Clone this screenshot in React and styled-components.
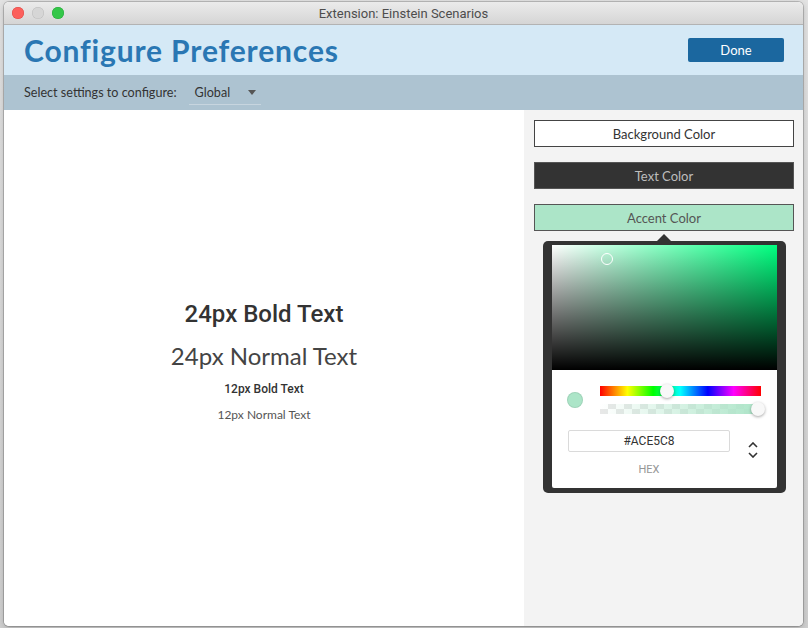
import React from "react";
import styled, { createGlobalStyle } from "styled-components";

const GlobalStyle = createGlobalStyle`
  html, body { margin: 0; padding: 0; background: #cfcfcf; }
  body { font-family: Lato, "Open Sans", sans-serif; }
  * { box-sizing: border-box; }
`;

const Page = styled.div`
  width: 808px;
  height: 628px;
  padding: 2px 5px 0 4px;
  overflow: hidden;
  background: linear-gradient(#e2e2e2, #cfcfcf);
`;

const Window = styled.div`
  width: 799px;
  height: 624px;
  border-radius: 5px;
  overflow: hidden;
  display: flex;
  flex-direction: column;
  background: #fff;
  box-shadow: 0 0 0 1px rgba(0, 0, 0, 0.18), 0 2px 6px rgba(0, 0, 0, 0.2);
`;

const TitleBar = styled.div`
  height: 23px;
  flex: none;
  display: grid;
  grid-template-columns: 1fr auto 1fr;
  align-items: center;
  border-bottom: 1px solid #b3b3b3;
  background: linear-gradient(#ebebeb, #d5d5d5);
`;

const Lights = styled.div`
  display: flex;
  gap: 8px;
  padding-left: 8px;
`;

const Light = styled.span`
  width: 12px;
  height: 12px;
  border-radius: 50%;
  background: ${(p) => p.$color};
  box-shadow: inset 0 0 0 0.5px ${(p) => p.$ring};
`;

const WindowTitle = styled.div`
  font-family: Roboto, "Liberation Sans", sans-serif;
  font-size: 13px;
  color: #4d4d4d;
`;

const Header = styled.header`
  height: 50px;
  flex: none;
  display: flex;
  align-items: center;
  justify-content: space-between;
  padding: 0 19px 0 20px;
  background: #d5e9f6;
`;

const Title = styled.h1`
  margin: 0;
  font-size: 30px;
  font-weight: 700;
  color: #2a77b3;
  letter-spacing: 0.85px;
`;

const DoneButton = styled.button`
  width: 96px;
  height: 24px;
  border: none;
  border-radius: 2px;
  background: #1b679f;
  color: #fff;
  font-family: Lato, sans-serif;
  font-size: 13px;
  padding: 0;
`;

const SubHeader = styled.div`
  height: 35px;
  flex: none;
  display: flex;
  align-items: center;
  padding-left: 20px;
  background: #adc3d1;
  font-size: 12.6px;
  color: #333;
`;

const Dropdown = styled.div`
  margin-left: 12px;
  width: 72px;
  height: 24px;
  margin-top: 1px;
  display: flex;
  align-items: center;
  justify-content: space-between;
  padding: 0 5px 0 6px;
  border-bottom: 1px solid #c7d5df;
  color: #333;
`;

const Caret = styled.span`
  width: 0;
  height: 0;
  border-left: 4px solid transparent;
  border-right: 4px solid transparent;
  border-top: 5px solid #555;
`;

const Content = styled.div`
  flex: 1;
  display: flex;
  min-height: 0;
`;

const Preview = styled.div`
  width: 520px;
  display: flex;
  flex-direction: column;
  align-items: center;
  padding-top: 189px;
  background: #fff;
`;

const Sample = styled.div`
  font-family: ${(p) => (p.$bold ? "Roboto, Lato, sans-serif" : "Lato, sans-serif")};
  font-size: ${(p) => p.$size}px;
  font-weight: ${(p) => (p.$bold ? 500 : 400)};
  line-height: ${(p) => p.$lh}px;
  margin-top: ${(p) => p.$mt || 0}px;
  color: ${(p) => p.$color};
`;

const Side = styled.div`
  flex: 1;
  background: #f3f3f3;
  padding: 10px 9px 0 10px;
  display: flex;
  flex-direction: column;
`;

const ColorButton = styled.div`
  height: 27px;
  display: flex;
  align-items: center;
  justify-content: center;
  font-size: 13px;
  background: ${(p) => p.$bg};
  color: ${(p) => p.$fg};
  border: 1px solid ${(p) => p.$border};
  & + & {
    margin-top: 15px;
  }
`;

const PickerFrame = styled.div`
  position: relative;
  margin: 10px 0 0 9px;
  width: 243px;
  padding: 4px 9px 5px;
  background: #333;
  border-radius: 5px;
  &::before {
    content: "";
    position: absolute;
    top: -7px;
    left: 114px;
    border-left: 7px solid transparent;
    border-right: 7px solid transparent;
    border-bottom: 7px solid #333;
  }
`;

const PickerCard = styled.div`
  background: #fff;
  border-radius: 0 0 2px 2px;
  overflow: hidden;
`;

const Saturation = styled.div`
  position: relative;
  height: 125px;
  background: linear-gradient(to top, #000, rgba(0, 0, 0, 0)),
    linear-gradient(to right, #fff, hsl(150, 100%, 50%));
`;

const Marker = styled.span`
  position: absolute;
  left: 49px;
  top: 8px;
  width: 12px;
  height: 12px;
  border-radius: 50%;
  border: 1.5px solid #fff;
`;

const Controls = styled.div`
  padding: 16px 16px 0 15px;
  display: flex;
  align-items: center;
  gap: 17px;
`;

const Swatch = styled.span`
  width: 16px;
  height: 16px;
  border-radius: 50%;
  background: #ace5c8;
  box-shadow: inset 0 0 0 1px rgba(0, 0, 0, 0.08);
`;

const Bars = styled.div`
  width: 161px;
  display: flex;
  flex-direction: column;
  gap: 8px;
`;

const Bar = styled.div`
  position: relative;
  height: 10px;
  background: ${(p) => p.$bg};
`;

const Thumb = styled.span`
  position: absolute;
  top: -2px;
  width: 14px;
  height: 14px;
  margin-left: -7px;
  border-radius: 50%;
  background: #f8f8f8;
  box-shadow: 0 1px 3px rgba(0, 0, 0, 0.35);
`;

const HexRow = styled.div`
  display: flex;
  align-items: flex-start;
  gap: 18px;
  padding: 16px 0 12px 16px;
`;

const HexColumn = styled.div`
  width: 162px;
  display: flex;
  flex-direction: column;
  align-items: center;
`;

const HexInput = styled.div`
  width: 100%;
  height: 22px;
  border: 1px solid #dadada;
  border-radius: 2px;
  display: flex;
  align-items: center;
  justify-content: center;
  font-family: Roboto, "Liberation Sans", sans-serif;
  font-size: 12px;
  color: #333;
`;

const HexLabel = styled.div`
  margin-top: 11px;
  font-family: Roboto, "Liberation Sans", sans-serif;
  font-size: 11px;
  color: #969696;
`;

const Arrows = styled.div`
  margin-top: 12px;
  display: flex;
  flex-direction: column;
  gap: 4px;
`;

const checker =
  "repeating-conic-gradient(#e8e8e8 0% 25%, #ffffff 0% 50%) 0 0 / 16px 10px";

export default function App() {
  return (
    <>
      <GlobalStyle />
      <Page>
        <Window>
          <TitleBar>
            <Lights>
              <Light $color="#fc605c" $ring="#de4a45" />
              <Light $color="#d6d6d6" $ring="#bcbcbc" />
              <Light $color="#34c749" $ring="#27a83a" />
            </Lights>
            <WindowTitle>Extension: Einstein Scenarios</WindowTitle>
            <span />
          </TitleBar>
          <Header>
            <Title>Configure Preferences</Title>
            <DoneButton>Done</DoneButton>
          </Header>
          <SubHeader>
            Select settings to configure:
            <Dropdown>
              Global
              <Caret />
            </Dropdown>
          </SubHeader>
          <Content>
            <Preview>
              <Sample $size={24} $lh={30} $bold $color="#333">
                24px Bold Text
              </Sample>
              <Sample $size={24} $lh={30} $mt={12} $color="#444">
                24px Normal Text
              </Sample>
              <Sample $size={12} $lh={16} $mt={10} $bold $color="#333">
                12px Bold Text
              </Sample>
              <Sample $size={12} $lh={16} $mt={10} $color="#555">
                12px Normal Text
              </Sample>
            </Preview>
            <Side>
              <ColorButton $bg="#fff" $fg="#333" $border="#444">
                Background Color
              </ColorButton>
              <ColorButton $bg="#333" $fg="#bdbdbd" $border="#555">
                Text Color
              </ColorButton>
              <ColorButton $bg="#ace5c8" $fg="#555" $border="#555">
                Accent Color
              </ColorButton>
              <PickerFrame>
                <PickerCard>
                  <Saturation>
                    <Marker />
                  </Saturation>
                  <Controls>
                    <Swatch />
                    <Bars>
                      <Bar $bg="linear-gradient(to right, #f00 0%, #ff0 17%, #0f0 33%, #0ff 50%, #00f 67%, #f0f 83%, #f00 100%)">
                        <Thumb style={{ left: "41.6%" }} />
                      </Bar>
                      <Bar $bg={`linear-gradient(to right, rgba(172,229,200,0), #ace5c8), ${checker}`}>
                        <Thumb style={{ left: "98%" }} />
                      </Bar>
                    </Bars>
                  </Controls>
                  <HexRow>
                    <HexColumn>
                      <HexInput>#ACE5C8</HexInput>
                      <HexLabel>HEX</HexLabel>
                    </HexColumn>
                    <Arrows>
                      <svg width="10" height="6" viewBox="0 0 10 6">
                        <path d="M1 5 L5 1 L9 5" fill="none" stroke="#333" strokeWidth="1.6" />
                      </svg>
                      <svg width="10" height="6" viewBox="0 0 10 6">
                        <path d="M1 1 L5 5 L9 1" fill="none" stroke="#333" strokeWidth="1.6" />
                      </svg>
                    </Arrows>
                  </HexRow>
                </PickerCard>
              </PickerFrame>
            </Side>
          </Content>
        </Window>
      </Page>
    </>
  );
}
